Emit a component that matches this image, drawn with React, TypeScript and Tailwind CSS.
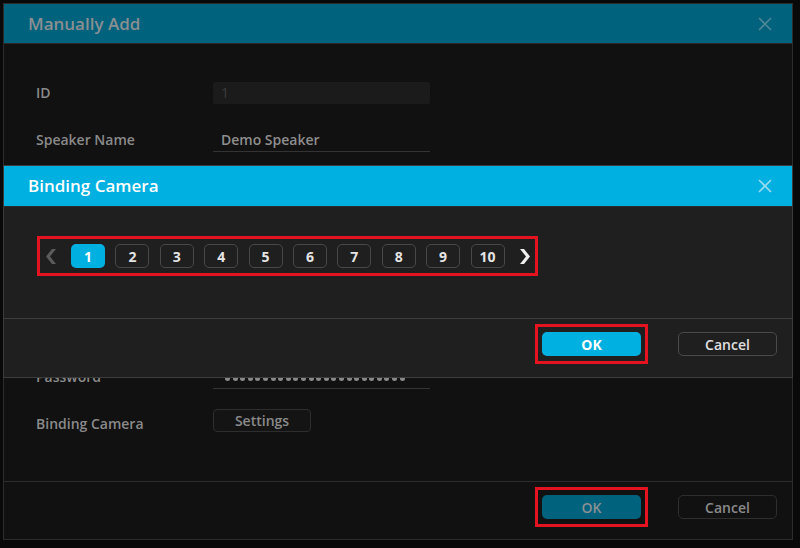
import React from "react";

const FONT = { fontFamily: '"Open Sans", "Noto Sans", sans-serif' };

const PAGES = [1, 2, 3, 4, 5, 6, 7, 8, 9, 10];

// rows 3-6 sit fully under the modal, so they carry no text
const ROWS = ["ID", "Speaker Name", "", "", "", "", "Password", "Binding Camera"];

const DOTS = Array.from({ length: 24 }, (_, i) => i);

function CloseIcon({ className }: { className: string }) {
  return (
    <svg width="14" height="14" viewBox="0 0 14 14" className={className}>
      <path d="M1 1 L13 13 M13 1 L1 13" stroke="currentColor" strokeWidth="1.6" fill="none" />
    </svg>
  );
}

function Chevron({ dir, className }: { dir: "left" | "right"; className: string }) {
  const pts = dir === "right" ? "0,0 4,0 10,7.5 4,15 0,15 6,7.5" : "10,0 6,0 0,7.5 6,15 10,15 4,7.5";
  return (
    <svg width="10" height="15" viewBox="0 0 10 15" className={className}>
      <polygon points={pts} fill="currentColor" />
    </svg>
  );
}

// red annotation frame drawn over a button
function Marker() {
  return <span className="pointer-events-none absolute -left-[7px] -right-[7px] -top-[8px] -bottom-[8px] border-[3px] border-[#e3141f]" />;
}

function RowValue({ label }: { label: string }) {
  if (label === "ID")
    return <div className="flex h-[22px] w-[217px] items-center rounded-[2px] bg-[#1b1b1b] pl-2 text-[14px] text-[#3c3c3c]">1</div>;
  if (label === "Speaker Name")
    return <div className="flex h-[24px] w-[217px] items-center border-b border-[#333] pl-2 text-[14px] font-semibold text-[#8e8e8e]">Demo Speaker</div>;
  if (label === "Password")
    return (
      <div className="flex h-[25px] w-[217px] items-end gap-[2.6px] border-b border-[#333] pb-[7px] pl-3">
        {DOTS.map((d) => (
          <span key={d} className="h-[5px] w-[5px] rounded-full bg-[#8a8a8a]" />
        ))}
      </div>
    );
  if (label === "Binding Camera")
    return (
      <button className="mb-[7px] h-[23px] w-[98px] rounded-[4px] border border-[#2e2e2e] bg-[#141414] text-[14px] font-semibold text-[#8a8a8a]">
        Settings
      </button>
    );
  return <div className="flex h-[24px] w-[217px] items-center border-b border-[#333]" />;
}

export default function App() {
  return (
    <div className="relative h-[548px] w-[800px] overflow-hidden bg-[#090909]" style={FONT}>
      {/* Manually Add (dimmed, behind) */}
      <div className="absolute left-[3px] top-[3px] flex h-[537px] w-[790px] flex-col border border-[#2c2c2c] bg-[#111111]">
        <div className="flex h-[40px] shrink-0 items-center justify-between border-b border-[#2a2a2a] bg-[#00627c] pl-[24px] pr-[20px]">
          <span className="text-[17px] font-semibold text-[#8a8f92]">Manually Add</span>
          <CloseIcon className="text-[#4f8696]" />
        </div>
        <div className="flex-1 pl-[32px] pt-[25px]">
          {ROWS.map((label, i) => (
            <div key={i} className="flex h-[47.3px] items-center">
              <span className="w-[177px] text-[14px] font-semibold text-[#8a8a8a]">{label}</span>
              <RowValue label={label} />
            </div>
          ))}
        </div>
        <div className="flex h-[58px] shrink-0 justify-end gap-[37px] border-t border-[#2c2c2c] pr-[15px] pt-[13px]">
          <button className="relative h-[24px] w-[99px] rounded-[5px] bg-[#00627c] text-[14px] font-semibold text-[#8a9094]">
            OK
            <Marker />
          </button>
          <button className="h-[24px] w-[99px] rounded-[5px] border border-[#2e2e2e] text-[14px] font-semibold text-[#8a8a8a]">
            Cancel
          </button>
        </div>
      </div>

      {/* Binding Camera (modal on top) */}
      <div className="absolute left-[3px] top-[165px] flex h-[213px] w-[790px] flex-col border border-[#3c3c3c] bg-[#1f1f1f]">
        <div className="flex h-[40px] shrink-0 items-center justify-between bg-[#00b0e0] pl-[24px] pr-[20px]">
          <span className="text-[17px] font-semibold text-white">Binding Camera</span>
          <CloseIcon className="text-[#9adcf0]" />
        </div>
        <div className="flex-1 border-t border-[#2a2a2a] pl-[33px] pt-[29px]">
          <div className="relative inline-flex h-[40px] items-center pl-[9px] pr-[8px]">
            <Chevron dir="left" className="mr-[15px] text-[#5c5c5c]" />
            <div className="flex gap-[10.4px]">
              {PAGES.map((p) =>
                p === 1 ? (
                  <button key={p} className="h-[24px] w-[34px] rounded-[5px] bg-[#00b0e0] text-[14px] font-bold text-white">
                    {p}
                  </button>
                ) : (
                  <button key={p} className="h-[24px] w-[34px] rounded-[5px] border border-[#484848] text-[14px] font-bold text-[#e4e4e4]">
                    {p}
                  </button>
                )
              )}
            </div>
            <Chevron dir="right" className="ml-[15px] text-[#efefef]" />
            <span className="pointer-events-none absolute inset-0 border-[3px] border-[#e3141f]" />
          </div>
        </div>
        <div className="flex h-[59px] shrink-0 justify-end gap-[37px] border-t border-[#3c3c3c] pr-[15px] pt-[13px]">
          <button className="relative h-[24px] w-[99px] rounded-[5px] bg-[#00b0e0] text-[14px] font-bold text-white">
            OK
            <Marker />
          </button>
          <button className="h-[24px] w-[99px] rounded-[5px] border border-[#4a4a4a] text-[14px] font-semibold text-[#e0e0e0]">
            Cancel
          </button>
        </div>
      </div>
    </div>
  );
}
